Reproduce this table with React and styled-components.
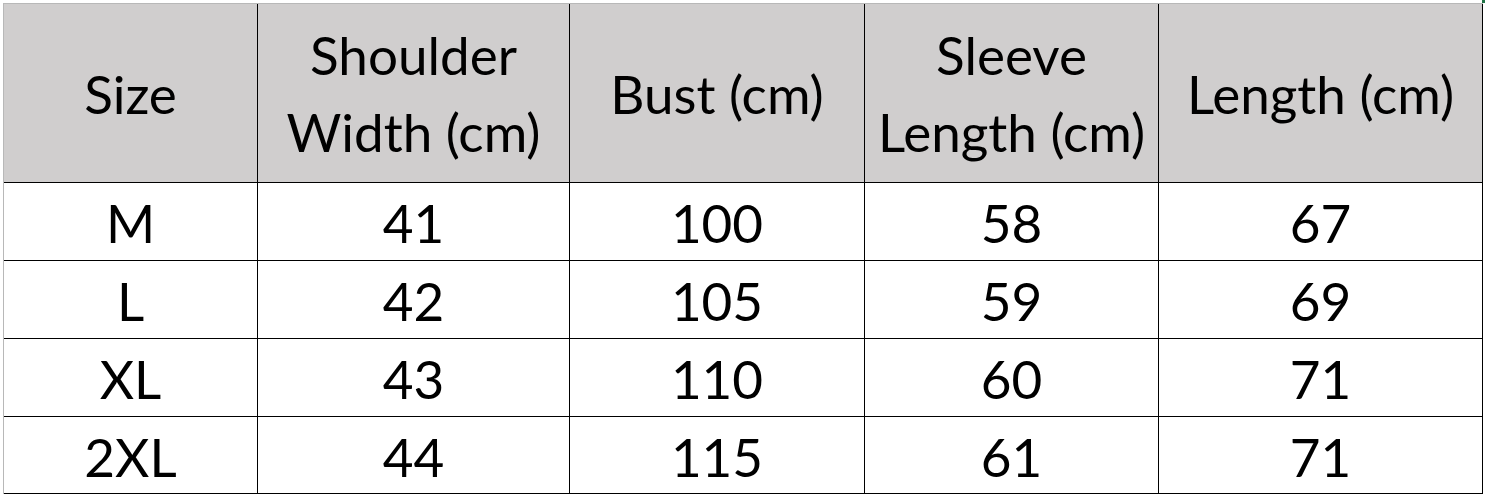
import React from "react";
import styled, { createGlobalStyle } from "styled-components";

const Global = createGlobalStyle`
  html, body { margin: 0; padding: 0; background: #ffffff; }
  body { font-family: Lato, "Open Sans", "Liberation Sans", sans-serif; }
`;

const Sheet = styled.div`
  position: relative;
  width: 1486px;
  height: 497px;
  box-sizing: border-box;
  padding: 3px 0 0 3px;
  background: #ffffff;
  overflow: hidden;
`;

const Grid = styled.div`
  display: grid;
  grid-template-columns: 254px 312px 295px 294px 324px;
  grid-template-rows: 179px 78px 78px 78px 77px;
  border-top: 1px solid #b8b8b8;
  border-left: 1px solid #b8b8b8;
  width: max-content;
`;

const Cell = styled.div`
  box-sizing: border-box;
  display: flex;
  align-items: center;
  justify-content: center;
  text-align: center;
  border-right: 1px solid #000;
  border-bottom: 1px solid #000;
  background: ${(p) => (p.$head ? "#d0cece" : "#ffffff")};
  color: #000;
  font-size: 53px;
  line-height: ${(p) => (p.$head ? "77px" : "60px")};
  padding-top: ${(p) => (p.$head ? "0" : "3px")};
  white-space: nowrap;
`;

const Marker = styled.div`
  position: absolute;
  top: 0;
  left: 1482px;
  width: 3px;
  height: 3px;
  background: #217346;
`;

const headers = [
  ["Size"],
  ["Shoulder", "Width (cm)"],
  ["Bust (cm)"],
  ["Sleeve", "Length (cm)"],
  ["Length (cm)"],
];

const rows = [
  ["M", "41", "100", "58", "67"],
  ["L", "42", "105", "59", "69"],
  ["XL", "43", "110", "60", "71"],
  ["2XL", "44", "115", "61", "71"],
];

export default function App() {
  return (
    <>
      <Global />
      <Sheet>
        <Grid>
          {headers.map((h, i) => (
            <Cell key={"h" + i} $head>
              <div>
                {h.map((line, j) => (
                  <div key={j}>{line}</div>
                ))}
              </div>
            </Cell>
          ))}
          {rows.map((r, ri) =>
            r.map((v, ci) => <Cell key={ri + "-" + ci}>{v}</Cell>)
          )}
        </Grid>
        <Marker />
      </Sheet>
    </>
  );
}
